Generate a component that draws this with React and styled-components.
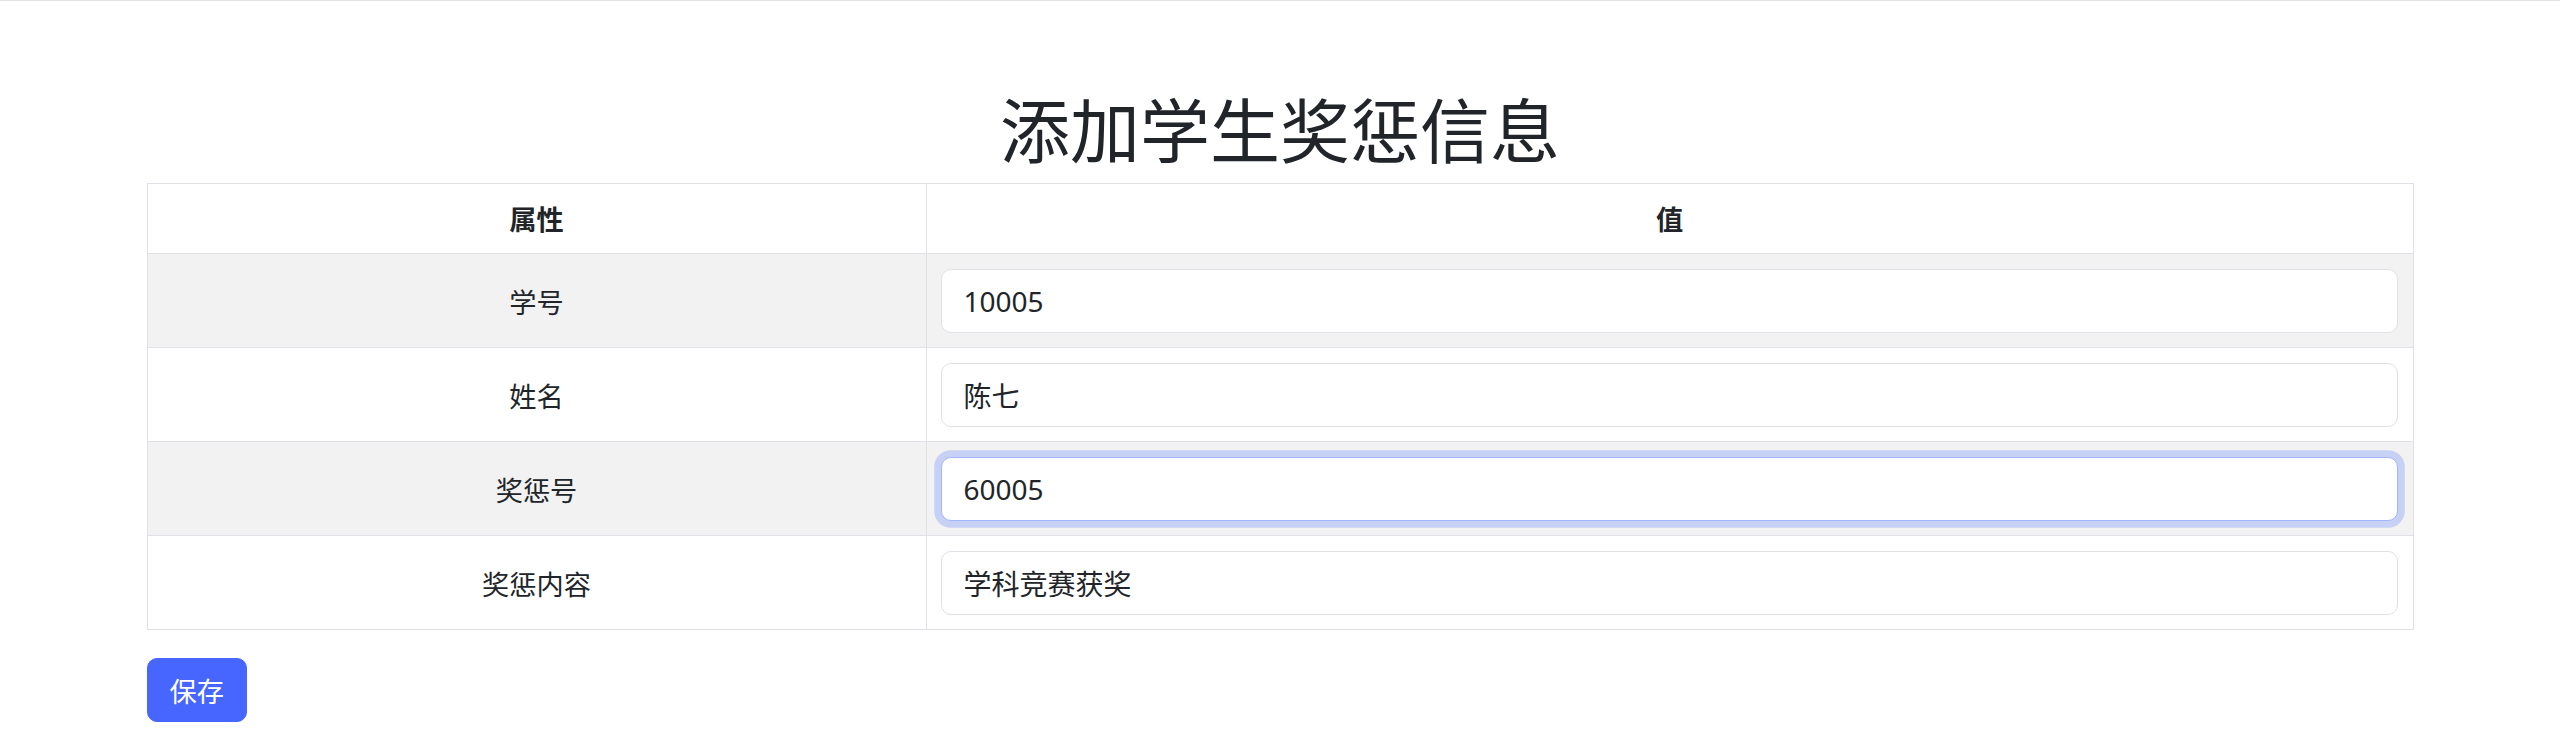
import React from "react";
import styled, { createGlobalStyle } from "styled-components";

const GlobalStyle = createGlobalStyle`
  html, body {
    margin: 0;
    padding: 0;
    background: #fff;
  }

  body {
    border-top: 1px solid #e3e3e3;
    font-family: "Noto Sans", "Noto Sans CJK SC", sans-serif;
    color: #212529;
  }
`;

const Page = styled.div`
  width: 2267px;
  margin: 0 auto;
  padding-top: 85px;
`;

const Title = styled.h1`
  margin: 0 0 13px;
  font-family: "Noto Sans CJK SC", sans-serif;
  font-size: 70px;
  line-height: 84px;
  font-weight: 400;
  text-align: center;
  color: #212529;
`;

const Table = styled.table`
  width: 100%;
  border-collapse: collapse;
  margin-bottom: 28px;
  font-size: 27.2px;
`;

const HeadCell = styled.th`
  border: 1px solid #dee2e6;
  padding: 13px 14px;
  height: 43px;
  line-height: 43px;
  font-family: "Noto Sans CJK SC", sans-serif;
  font-weight: 700;
  text-align: center;
  width: ${(p) => p.$width || "auto"};
`;

const Row = styled.tr`
  background: ${(p) => (p.$striped ? "#f2f2f2" : "#fff")};
`;

const Label = styled.td`
  border: 1px solid #dee2e6;
  padding: 14.5px;
  text-align: center;
  vertical-align: middle;
  font-family: "Noto Sans CJK SC", sans-serif;
`;

const ValueCell = styled.td`
  border: 1px solid #dee2e6;
  padding: 14.5px;
  vertical-align: middle;
`;

const Input = styled.input`
  display: block;
  box-sizing: border-box;
  width: 100%;
  height: 64px;
  padding: 0 21.5px;
  border: 1px solid ${(p) => (p.$focused ? "#a3b5fb" : "#dee2e6")};
  border-radius: 10px;
  background: #fff;
  font-family: "Noto Sans", "Noto Sans CJK SC", sans-serif;
  font-size: 28px;
  color: #212529;
  outline: none;
  box-shadow: ${(p) => (p.$focused ? "0 0 0 6.8px #c7d1f5" : "none")};
`;

const SaveButton = styled.button`
  height: 64px;
  padding: 0 22px;
  border: 1px solid #4766ff;
  border-radius: 10px;
  background: #4766ff;
  color: #fff;
  font-family: "Noto Sans CJK SC", sans-serif;
  font-size: 27.2px;
  cursor: pointer;
`;

const fields = [
  { label: "学号", value: "10005" },
  { label: "姓名", value: "陈七" },
  { label: "奖惩号", value: "60005", focused: true },
  { label: "奖惩内容", value: "学科竞赛获奖" },
];

const App = () => (
  <>
    <GlobalStyle />
    <Page>
      <Title>添加学生奖惩信息</Title>
      <Table>
        <thead>
          <tr>
            <HeadCell $width="750px">属性</HeadCell>
            <HeadCell>值</HeadCell>
          </tr>
        </thead>
        <tbody>
          {fields.map((field, i) => (
            <Row key={field.label} $striped={i % 2 === 0}>
              <Label>{field.label}</Label>
              <ValueCell>
                <Input defaultValue={field.value} $focused={field.focused} />
              </ValueCell>
            </Row>
          ))}
        </tbody>
      </Table>
      <SaveButton>保存</SaveButton>
    </Page>
  </>
);

export default App;
